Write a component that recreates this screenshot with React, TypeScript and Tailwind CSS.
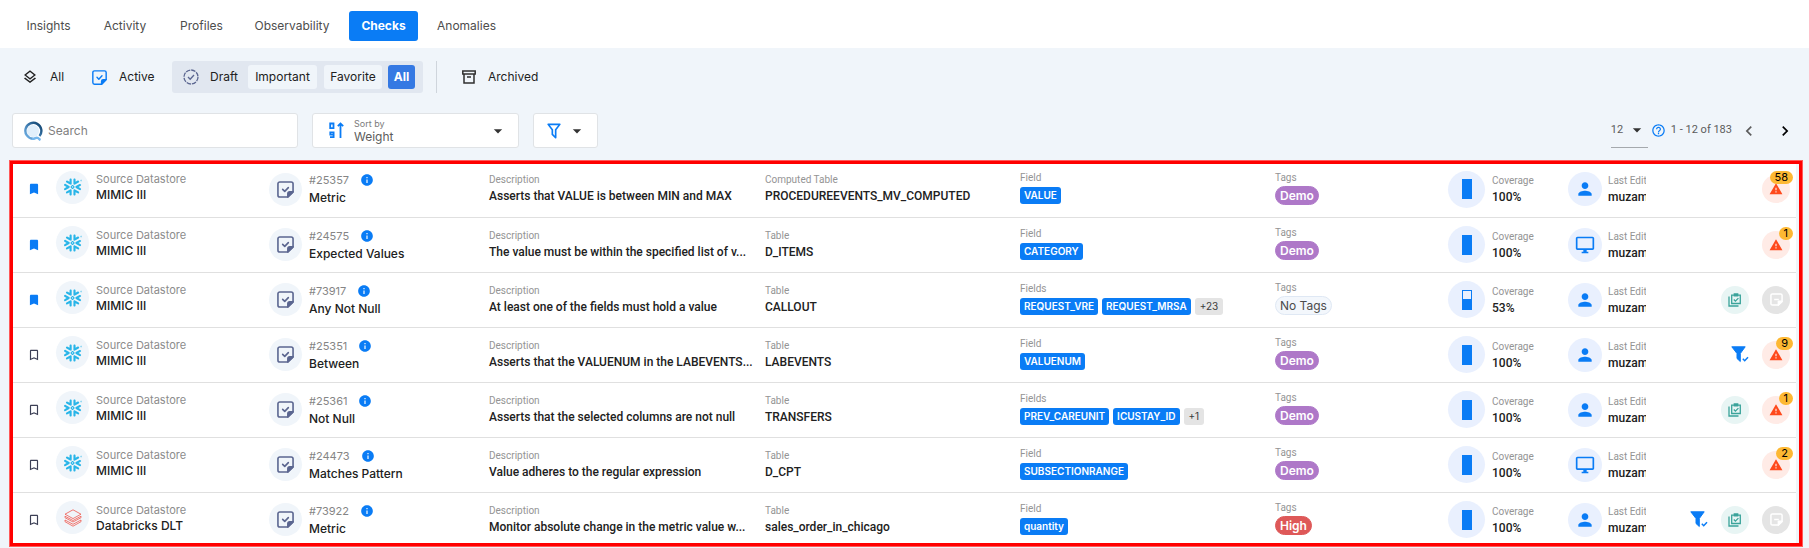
import type { ReactNode } from "react";
import {
  MdArrowDropDown,
  MdBookmark,
  MdBookmarkBorder,
  MdChevronLeft,
  MdChevronRight,
  MdHelpOutline,
  MdInfo,
  MdOutlineDesktopWindows,
  MdOutlineLayers,
  MdPerson,
  MdWarning,
} from "react-icons/md";
import { SiSnowflake } from "react-icons/si";

type Check = {
  id: string;
  saved: boolean;
  store: "MIMIC III" | "Databricks DLT";
  rule: string;
  description: string;
  tableLabel: string;
  table: string;
  fields: string[];
  more?: string;
  tag: "Demo" | "High" | "No Tags";
  coverage: number;
  editor: "person" | "system";
  filtered?: boolean;
  template?: boolean;
  anomalies?: number;
};

const checks: Check[] = [
  { id: "#25357", saved: true, store: "MIMIC III", rule: "Metric", description: "Asserts that VALUE is between MIN and MAX", tableLabel: "Computed Table", table: "PROCEDUREEVENTS_MV_COMPUTED", fields: ["VALUE"], tag: "Demo", coverage: 100, editor: "person", anomalies: 58 },
  { id: "#24575", saved: true, store: "MIMIC III", rule: "Expected Values", description: "The value must be within the specified list of v...", tableLabel: "Table", table: "D_ITEMS", fields: ["CATEGORY"], tag: "Demo", coverage: 100, editor: "system", anomalies: 1 },
  { id: "#73917", saved: true, store: "MIMIC III", rule: "Any Not Null", description: "At least one of the fields must hold a value", tableLabel: "Table", table: "CALLOUT", fields: ["REQUEST_VRE", "REQUEST_MRSA"], more: "+23", tag: "No Tags", coverage: 53, editor: "person", template: true },
  { id: "#25351", saved: false, store: "MIMIC III", rule: "Between", description: "Asserts that the VALUENUM in the LABEVENTS...", tableLabel: "Table", table: "LABEVENTS", fields: ["VALUENUM"], tag: "Demo", coverage: 100, editor: "person", filtered: true, anomalies: 9 },
  { id: "#25361", saved: false, store: "MIMIC III", rule: "Not Null", description: "Asserts that the selected columns are not null", tableLabel: "Table", table: "TRANSFERS", fields: ["PREV_CAREUNIT", "ICUSTAY_ID"], more: "+1", tag: "Demo", coverage: 100, editor: "person", template: true, anomalies: 1 },
  { id: "#24473", saved: false, store: "MIMIC III", rule: "Matches Pattern", description: "Value adheres to the regular expression", tableLabel: "Table", table: "D_CPT", fields: ["SUBSECTIONRANGE"], tag: "Demo", coverage: 100, editor: "system", anomalies: 2 },
  { id: "#73922", saved: false, store: "Databricks DLT", rule: "Metric", description: "Monitor absolute change in the metric value w...", tableLabel: "Table", table: "sales_order_in_chicago", fields: ["quantity"], tag: "High", coverage: 100, editor: "person", filtered: true, template: true },
];

const tagStyles = {
  Demo: "bg-[#ae78c8] border-[#ae78c8] text-white font-semibold",
  High: "bg-[#de5858] border-[#de5858] text-white font-semibold",
  "No Tags": "bg-[#f3f7fc] border-[#dfe8f4] text-[#4b4b4b]",
};

function CheckNoteIcon({ className }: { className: string }) {
  return (
    <svg viewBox="0 0 18 18" className={className} fill="none" stroke="currentColor" strokeWidth="1.7" strokeLinejoin="round" strokeLinecap="round" aria-hidden="true">
      <path d="M11.5 17H3a2 2 0 0 1-2-2V3a2 2 0 0 1 2-2h12a2 2 0 0 1 2 2v8.500z" />
      <path d="M11.500 17v-3.500a2 2 0 0 1 2-2H17z" fill="currentColor" />
      <path d="M6 8.800l2.200 2.200 3.800-4" />
    </svg>
  );
}

function DraftIcon() {
  return (
    <svg viewBox="0 0 16 16" className="size-4" fill="none" stroke="#5b6690" strokeWidth="1.300" aria-hidden="true">
      <circle cx="8" cy="8" r="7" strokeDasharray="4.500 1" />
      <path d="M5 8l2.200 2.200L11 6" />
    </svg>
  );
}

function ArchiveIcon() {
  return (
    <svg viewBox="0 0 14 14" className="size-[14px]" fill="none" stroke="#2f2f2f" strokeWidth="1.500" aria-hidden="true">
      <path d="M.8 1h12.400v3H.8zM2 4v9h10V4M5 7h4" />
    </svg>
  );
}

function SearchLogo() {
  return (
    <svg viewBox="0 0 20 20" className="size-5 shrink-0" fill="none" aria-hidden="true">
      <defs>
        <linearGradient id="ring" x1="0" y1="1" x2="1" y2="0">
          <stop offset="0" stopColor="#74b6ec" />
          <stop offset=".5" stopColor="#3f7cb0" />
          <stop offset="1" stopColor="#0b3c66" />
        </linearGradient>
      </defs>
      <circle cx="10" cy="10" r="6" fill="#e1effb" />
      <path d="M16.500 15A8 8 0 1 0 9.500 17.800" stroke="url(#ring)" strokeWidth="2.400" />
      <path d="M9 17.800c3.500.2 4-2 6-.8.800.5 1.500 1.500 2.500 2" stroke="#74b6ec" strokeWidth="2.400" />
    </svg>
  );
}

function SortIcon() {
  return (
    <svg viewBox="0 0 15 17" className="h-[17px] w-[15px] shrink-0" fill="none" stroke="#0a7cf5" strokeWidth="1.800" aria-hidden="true">
      <path d="M1.200 1.500h3.300v4.600H1.200zM1 15.100h3.600v-4.700H1.300v2.200h3.300" />
      <path d="M11.500 16V2.500M8.800 4.200l2.700-2.700 2.700 2.700" />
    </svg>
  );
}

function FilterOutlineIcon() {
  return (
    <svg viewBox="0 0 24 24" className="size-5" fill="#0a7cf5" aria-hidden="true">
      <path d="M15 19.880c.04.300-.06.620-.290.830a1 1 0 0 1-1.410 0L9.290 16.700a1 1 0 0 1-.290-.830v-5.120L4.210 4.620a1 1 0 0 1 .170-1.400C4.570 3.080 4.780 3 5 3h14c.220 0 .430.080.620.220a1 1 0 0 1 .170 1.400L15 10.750v9.130M7.040 5 11 10.060v5.520l2 2v-7.530L16.960 5H7.040z" />
    </svg>
  );
}

function FilterCheckIcon() {
  return (
    <svg viewBox="0 0 18 17" className="h-[17px] w-[18px]" aria-hidden="true">
      <path d="M.8.800h13.400L9.300 7.500v8L6 12.500v-5z" fill="#0a7cf5" stroke="#0a7cf5" strokeLinejoin="round" />
      <path d="M11.800 12.800l1.900 1.900 3.300-3.500" fill="none" stroke="#0a7cf5" strokeWidth="1.500" />
    </svg>
  );
}

function TemplateIcon() {
  return (
    <svg viewBox="0 0 14 14" className="size-[14px]" fill="none" stroke="#3aa39a" strokeWidth="1.300" aria-hidden="true">
      <path d="M1 3.500V13h9.500M3.700 2.200h8.600v8.300H3.700z" />
      <path d="M6.300 1h3.400v1.800H6.300z" fill="#3aa39a" />
      <path d="M5.800 6.500l1.600 1.600 3-3" />
    </svg>
  );
}

function NoteMinusIcon() {
  return (
    <svg viewBox="0 0 14 14" className="size-[13px]" fill="none" stroke="#fff" strokeWidth="1.600" strokeLinejoin="round" aria-hidden="true">
      <path d="M9 13H2.500A1.500 1.500 0 0 1 1 11.500v-9A1.500 1.500 0 0 1 2.500 1h9A1.500 1.500 0 0 1 13 2.500V9z" />
      <path d="M9 13V9h4z" fill="#fff" />
      <path d="M4.500 7h5" />
    </svg>
  );
}

function DatabricksIcon() {
  return (
    <svg viewBox="0 0 18 18" className="size-[18px]" fill="none" stroke="#f0584e" strokeWidth=".8" strokeLinejoin="round" aria-hidden="true">
      <path d="M1 5.200 9 .8l8 4.400-8 4.400z" />
      <path d="M1 7.200v1.500l8 4.300 8-4.300V7.200l-8 4.300z" />
      <path d="M1 11v1.700l8 4.500 8-4.500V11l-8 4.300z" />
    </svg>
  );
}

function Tab({ active, className, children }: { active?: boolean; className: string; children: ReactNode }) {
  return (
    <a
      href="#"
      aria-current={active ? "page" : undefined}
      className={`flex h-[30px] items-center justify-center rounded-[3px] text-xs ${className} ${active ? "bg-[#0a7cf5] font-bold text-white" : "text-[#4d4d4d]"}`}
    >
      {children}
    </a>
  );
}

function Stat({ label, children }: { label: string; children: ReactNode }) {
  return (
    <div className="min-w-0 font-['Roboto',sans-serif] whitespace-nowrap">
      <div className="text-[10px] leading-4 text-[#949494]">{label}</div>
      <div className="text-xs leading-4 font-medium text-[#212121]">{children}</div>
    </div>
  );
}

function CheckRow({ check }: { check: Check }) {
  return (
    <tr className="h-[55px] border-b border-[#e0e0e0] last:border-0">
      <td>
        <button aria-label={check.saved ? "Remove bookmark" : "Add bookmark"} className="ml-[14px] flex">
          {check.saved ? <MdBookmark className="size-[14px] text-[#0a7cf5]" /> : <MdBookmarkBorder className="size-[14px] text-[#3c3f55]" />}
        </button>
      </td>
      <td className="pb-1">
        <div className="flex items-center gap-[7px]">
          <span className="flex size-[33px] shrink-0 items-center justify-center rounded-full bg-[#f0f5fa]">
            {check.store === "MIMIC III" ? <SiSnowflake className="size-[18px] text-[#29b5e8]" /> : <DatabricksIcon />}
          </span>
          <div>
            <div className="text-[11px] leading-4 text-[#8c8c8c]">Source Datastore</div>
            <div className="text-xs leading-4 font-medium text-[#212121]">{check.store}</div>
          </div>
        </div>
      </td>
      <td>
        <div className="flex items-center gap-[7px]">
          <span className="flex size-[33px] shrink-0 items-center justify-center rounded-full bg-[#f0f5fa] text-[#5b6690]">
            <CheckNoteIcon className="size-[17px]" />
          </span>
          <div>
            <div className="flex items-center gap-[11px] text-[11px] leading-[18px] text-[#858585]">
              {check.id}
              <button aria-label={`About check ${check.id}`}>
                <MdInfo className="size-[14px] text-[#0a7cf5]" />
              </button>
            </div>
            <div className="text-xs leading-[18px] font-medium text-[#212121]">{check.rule}</div>
          </div>
        </div>
      </td>
      <td className="pb-[2px] pl-px">
        <Stat label="Description">{check.description}</Stat>
      </td>
      <td className="pb-[2px]">
        <Stat label={check.tableLabel}>{check.table}</Stat>
      </td>
      <td className="pb-1">
        <div className="font-['Roboto',sans-serif] text-[10px] leading-4 text-[#949494]">{check.fields.length > 1 ? "Fields" : "Field"}</div>
        <div className="mt-px flex items-center gap-1">
          {check.fields.map((field) => (
            <span key={field} className="rounded-[3px] bg-[#0a7cf5] px-1 text-[10px] leading-[17px] font-semibold text-white">
              {field}
            </span>
          ))}
          {check.more && <span className="rounded-[3px] bg-[#e4e4e4] px-[5px] text-[10px] leading-[17px] text-[#3c3c3c]">{check.more}</span>}
        </div>
      </td>
      <td className="pb-1">
        <div className="font-['Roboto',sans-serif] text-[10px] leading-4 text-[#949494]">Tags</div>
        <span className={`block w-fit rounded-full border px-1 text-[12px] leading-[17px] ${tagStyles[check.tag]}`}>{check.tag}</span>
      </td>
      <td>
        <div className="flex items-center gap-[7px]">
          <span className="flex size-[37px] shrink-0 items-center justify-center rounded-full bg-[#e9f0fe]">
            <span className="flex h-5 w-[10px] flex-col justify-end border border-[#0a7cf5]">
              <span className="bg-[#0a7cf5]" style={{ height: `${check.coverage}%` }} />
            </span>
          </span>
          <Stat label="Coverage">{check.coverage}%</Stat>
        </div>
      </td>
      <td>
        <div className="flex items-center gap-[6px] overflow-hidden">
          <span className="flex size-[34px] shrink-0 items-center justify-center rounded-full bg-[#e9f0fe] text-[#0a7cf5]">
            {check.editor === "person" ? <MdPerson className="size-5" /> : <MdOutlineDesktopWindows className="size-5" />}
          </span>
          <Stat label="Last Edit">muzam</Stat>
        </div>
      </td>
      <td>
        <div className="flex items-center justify-end gap-[13px] pr-[6px]">
          {check.filtered && <FilterCheckIcon />}
          {check.template && (
            <span className="flex size-7 items-center justify-center rounded-full bg-[#e8f5f4]">
              <TemplateIcon />
            </span>
          )}
          {check.anomalies ? (
            <span className="relative flex size-7 items-center justify-center rounded-full bg-[#ffebe6]">
              <MdWarning className="size-[14px] text-[#ff4a1c]" />
              <span className="absolute -top-1 -right-[3px] rounded-full bg-[#fdb833] px-[5px] text-center text-[11px] leading-[13px] text-black">
                {check.anomalies}
              </span>
            </span>
          ) : (
            <span className="flex size-7 items-center justify-center rounded-full bg-[#e4e4e4]">
              <NoteMinusIcon />
            </span>
          )}
        </div>
      </td>
    </tr>
  );
}

export default function App() {
  return (
    <div className="bg-[#f0f5fa] pb-px font-['Inter',sans-serif] text-[#212121]">
      <nav className="flex h-12 items-center bg-white pt-1 pl-3">
        <Tab className="w-[73px]">Insights</Tab>
        <Tab className="w-[80px]">Activity</Tab>
        <Tab className="w-[73px]">Profiles</Tab>
        <Tab className="w-[108px]">Observability</Tab>
        <Tab active className="mx-[3px] w-[69px]">Checks</Tab>
        <Tab className="w-[91px]">Anomalies</Tab>
      </nav>

      <div className="mt-[13px] flex h-8 items-center text-xs">
        <button className="ml-[22px] flex w-[70px] items-center gap-3">
          <MdOutlineLayers className="size-4" />
          All
        </button>
        <button className="flex w-20 items-center gap-3">
          <CheckNoteIcon className="size-[15px] text-[#0a7cf5]" />
          Active
        </button>
        <div className="flex h-8 items-center rounded-[3px] bg-[#e1e7f0] pr-2 pl-[11px]">
          <button className="flex w-[65px] items-center gap-[11px]">
            <DraftIcon />
            Draft
          </button>
          <button className="h-6 w-[69px] rounded-[3px] bg-[#f0f5fa]">Important</button>
          <button className="ml-[7px] h-6 w-[58px] rounded-[3px] bg-[#f0f5fa]">Favorite</button>
          <button className="ml-[6px] h-6 w-[27px] rounded-[3px] bg-[#3579e3] font-bold text-white">All</button>
        </div>
        <span className="ml-[13px] h-8 w-px bg-[#cfd5dc]" />
        <button className="ml-[25px] flex items-center gap-3">
          <ArchiveIcon />
          Archived
        </button>
      </div>

      <div className="mt-5 flex items-center justify-between pr-[14px] pl-3">
        <div className="flex gap-[14px]">
          <label className="flex h-[35px] w-[286px] items-center gap-[5px] rounded-[3px] border border-[#e0e3e6] bg-white px-[10px]">
            <SearchLogo />
            <input aria-label="Search" placeholder="Search" className="min-w-0 grow bg-transparent text-xs outline-none placeholder:text-[#808080]" />
          </label>
          <div className="flex h-[35px] w-[207px] items-center rounded-[3px] border border-[#e0e3e6] bg-white pr-[10px] pl-4">
            <SortIcon />
            <div className="ml-[10px] flex grow flex-col">
              <label htmlFor="sort" className="text-[9px] leading-3 text-[#7b7b7b]">Sort by</label>
              <select id="sort" className="h-[14px] appearance-none bg-transparent text-xs leading-[14px] text-[#5c5c5c] outline-none">
                <option>Weight</option>
              </select>
            </div>
            <MdArrowDropDown className="size-5 text-[#333]" />
          </div>
          <button aria-label="Filter" className="flex h-[35px] w-[65px] items-center justify-center gap-[3px] rounded-[3px] border border-[#e0e3e6] bg-white">
            <FilterOutlineIcon />
            <MdArrowDropDown className="size-5 text-[#333]" />
          </button>
        </div>
        <div className="flex items-center font-['Roboto',sans-serif] text-[11px] text-[#5c5c5c]">
          <div className="flex h-[35px] w-[37px] items-center border-b border-[#a5a9ad]">
            <select aria-label="Rows per page" className="w-4 appearance-none bg-transparent outline-none">
              <option>12</option>
            </select>
            <MdArrowDropDown className="size-5 shrink-0 text-[#333]" />
          </div>
          <MdHelpOutline className="mr-[5px] ml-[3px] size-[15px] text-[#0a7cf5]" />
          <span className="whitespace-nowrap">1 - 12 of 183</span>
          <button aria-label="Previous page" className="ml-[7px]">
            <MdChevronLeft className="size-5" />
          </button>
          <button aria-label="Next page" className="ml-4 text-black">
            <MdChevronRight className="size-5" />
          </button>
        </div>
      </div>

      <div className="relative mt-3 mr-[6px] ml-[9px] pt-[2px] pr-[7px] pl-1">
        <table className="w-full table-fixed border-collapse bg-white">
          <colgroup>
            <col className="w-[43px]" />
            <col className="w-[213px]" />
            <col className="w-[219px]" />
            <col className="w-[277px]" />
            <col className="w-[255px]" />
            <col className="w-[255px]" />
            <col className="w-[173px]" />
            <col className="w-[120px]" />
            <col className="w-[78px]" />
            <col className="w-[150px]" />
          </colgroup>
          <tbody>
            {checks.map((check) => (
              <CheckRow key={check.id} check={check} />
            ))}
          </tbody>
        </table>
        <div className="pointer-events-none absolute inset-px border-[3px] border-[#ff0000] ring-1 ring-[#ff5a5a]" />
      </div>
    </div>
  );
}
